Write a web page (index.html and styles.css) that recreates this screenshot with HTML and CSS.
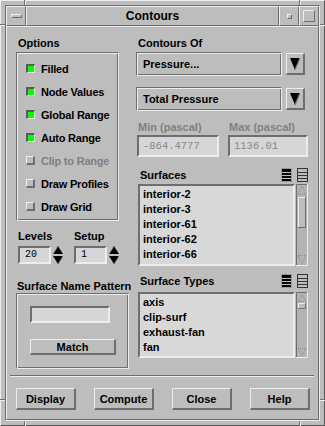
FILE: index.html
```html
<!DOCTYPE html>
<html>
<head>
<meta charset="utf-8">
<link rel="stylesheet" href="styles.css">
</head>
<body>
<div class="window">
  <span class="notch nv nt n1"></span>
  <span class="notch nv nt n2"></span>
  <span class="notch nv nb n1"></span>
  <span class="notch nv nb n2"></span>
  <span class="notch nh nl h1"></span>
  <span class="notch nh nr h1"></span>
  <span class="notch nh nl h2"></span>
  <span class="notch nh nr h2"></span>
  <div class="inner">
    <div class="titlebar">
      <div class="tb tb-btn"><span class="menu-bar"></span></div>
      <div class="tb tb-title">Contours</div>
      <div class="tb tb-btn"><span class="min-dot"></span></div>
      <div class="tb tb-btn"><span class="max-box"></span></div>
    </div>
    <div class="client">
      <div class="main">
        <div class="left">
          <div class="lbl">Options</div>
          <div class="etched opts">
            <div class="check-row"><span class="cb on"></span>Filled</div>
            <div class="check-row"><span class="cb on"></span>Node Values</div>
            <div class="check-row"><span class="cb on"></span>Global Range</div>
            <div class="check-row"><span class="cb on"></span>Auto Range</div>
            <div class="check-row dim"><span class="cb"></span>Clip to Range</div>
            <div class="check-row"><span class="cb"></span>Draw Profiles</div>
            <div class="check-row"><span class="cb"></span>Draw Grid</div>
          </div>
          <div class="spin-groups">
            <div class="spin-group">
              <div class="lbl0">Levels</div>
              <div class="spin-row">
                <div class="field sfield">20</div>
                <svg class="spin" width="10" height="18" viewBox="0 0 10 18">
                  <polygon points="5,0 10,8 0,8" fill="#000"/>
                  <polyline points="0,8 5,0" fill="none" stroke="#8a8a8a" stroke-width="1"/>
                  <polygon points="0,10 10,10 5,18" fill="#000"/>
                  <polyline points="10,10 5,18" fill="none" stroke="#6a6a6a" stroke-width="1"/>
                </svg>
              </div>
            </div>
            <div class="spin-group">
              <div class="lbl0">Setup</div>
              <div class="spin-row">
                <div class="field sfield">1</div>
                <svg class="spin" width="10" height="18" viewBox="0 0 10 18">
                  <polygon points="5,0 10,8 0,8" fill="#000"/>
                  <polyline points="0,8 5,0" fill="none" stroke="#8a8a8a" stroke-width="1"/>
                  <polygon points="0,10 10,10 5,18" fill="#000"/>
                  <polyline points="10,10 5,18" fill="none" stroke="#6a6a6a" stroke-width="1"/>
                </svg>
              </div>
            </div>
          </div>
          <div class="lbl snp-lbl">Surface Name Pattern</div>
          <div class="etched snp">
            <div class="field snp-field"></div>
            <div class="btn match">Match</div>
          </div>
        </div>
        <div class="right">
          <div class="lbl">Contours Of</div>
          <div class="dd-row">
            <div class="dd-box">Pressure...</div>
            <div class="dd-btn">
              <svg width="10" height="12" viewBox="0 0 10 12">
                <polygon points="0,0 10,0 5,12" fill="#000"/>
                <polyline points="10,0 5,12" fill="none" stroke="#7a7a7a" stroke-width="1.2"/>
              </svg>
            </div>
          </div>
          <div class="dd-row dd2">
            <div class="dd-box">Total Pressure</div>
            <div class="dd-btn">
              <svg width="10" height="12" viewBox="0 0 10 12">
                <polygon points="0,0 10,0 5,12" fill="#000"/>
                <polyline points="10,0 5,12" fill="none" stroke="#7a7a7a" stroke-width="1.2"/>
              </svg>
            </div>
          </div>
          <div class="minmax">
            <div class="mm-col">
              <div class="dim mm-lbl">Min (pascal)</div>
              <div class="field mm-field f-min">-864.4777</div>
            </div>
            <div class="mm-col">
              <div class="dim mm-lbl">Max (pascal)</div>
              <div class="field mm-field f-max">1136.01</div>
            </div>
          </div>
          <div class="list-head surf-head">
            <span class="lh-lbl">Surfaces</span>
            <span class="lh-icons">
              <svg width="11" height="14" viewBox="0 0 11 14">
                <rect x="0" y="0" width="11" height="14" fill="#000"/>
                <rect x="0.5" y="0.5" width="10" height="13" fill="none" stroke="#9a9a9a"/>
                <rect x="1" y="4" width="9" height="1" fill="#bdbdbd"/>
                <rect x="1" y="7" width="9" height="1" fill="#bdbdbd"/>
                <rect x="1" y="10" width="9" height="1" fill="#bdbdbd"/>
              </svg>
              <svg width="11" height="14" viewBox="0 0 11 14">
                <rect x="0.5" y="0.5" width="10" height="13" fill="#bdbdbd" stroke="#333"/>
                <rect x="1" y="4" width="9" height="1" fill="#333"/>
                <rect x="1" y="7" width="9" height="1" fill="#333"/>
                <rect x="1" y="10" width="9" height="1" fill="#333"/>
              </svg>
            </span>
          </div>
          <div class="listbox">
            <div class="list l1">
              <div class="item">interior-2</div>
              <div class="item">interior-3</div>
              <div class="item">interior-61</div>
              <div class="item">interior-62</div>
              <div class="item">interior-66</div>
            </div>
            <svg class="scroll" width="12" height="82" viewBox="0 0 12 82">
              <rect x="0" y="0" width="12" height="82" fill="#b4b4b4"/>
              <polyline points="0.5,82 0.5,0.5 12,0.5" fill="none" stroke="#6e6e6e"/>
              <polyline points="11.5,0 11.5,81.5 0,81.5" fill="none" stroke="#ececec"/>
              <polygon points="6,2.5 10,10.5 2,10.5" fill="none" stroke="#8a8a8a" stroke-dasharray="1,1"/>
              <rect x="2" y="13" width="8" height="31" fill="#bdbdbd"/>
              <polyline points="2.5,44 2.5,13.5 10,13.5" fill="none" stroke="#ececec"/>
              <polyline points="9.5,13 9.5,43.5 2,43.5" fill="none" stroke="#6e6e6e"/>
              <polygon points="2,71.5 10,71.5 6,79.5" fill="none" stroke="#8a8a8a" stroke-dasharray="1,1"/>
            </svg>
          </div>
          <div class="list-head types-head">
            <span class="lh-lbl">Surface Types</span>
            <span class="lh-icons">
              <svg width="11" height="14" viewBox="0 0 11 14">
                <rect x="0" y="0" width="11" height="14" fill="#000"/>
                <rect x="0.5" y="0.5" width="10" height="13" fill="none" stroke="#9a9a9a"/>
                <rect x="1" y="4" width="9" height="1" fill="#bdbdbd"/>
                <rect x="1" y="7" width="9" height="1" fill="#bdbdbd"/>
                <rect x="1" y="10" width="9" height="1" fill="#bdbdbd"/>
              </svg>
              <svg width="11" height="14" viewBox="0 0 11 14">
                <rect x="0.5" y="0.5" width="10" height="13" fill="#bdbdbd" stroke="#333"/>
                <rect x="1" y="4" width="9" height="1" fill="#333"/>
                <rect x="1" y="7" width="9" height="1" fill="#333"/>
                <rect x="1" y="10" width="9" height="1" fill="#333"/>
              </svg>
            </span>
          </div>
          <div class="listbox">
            <div class="list l2">
              <div class="item">axis</div>
              <div class="item">clip-surf</div>
              <div class="item">exhaust-fan</div>
              <div class="item">fan</div>
            </div>
            <svg class="scroll" width="12" height="66" viewBox="0 0 12 66">
              <rect x="0" y="0" width="12" height="66" fill="#b4b4b4"/>
              <polyline points="0.5,66 0.5,0.5 12,0.5" fill="none" stroke="#6e6e6e"/>
              <polyline points="11.5,0 11.5,65.5 0,65.5" fill="none" stroke="#ececec"/>
              <polygon points="6,2.5 10,9.5 2,9.5" fill="none" stroke="#8a8a8a" stroke-dasharray="1,1"/>
              <rect x="2" y="11" width="8" height="6" fill="#bdbdbd"/>
              <polyline points="2.5,17 2.5,11.5 10,11.5" fill="none" stroke="#ececec"/>
              <polyline points="9.5,11 9.5,16.5 2,16.5" fill="none" stroke="#6e6e6e"/>
              <polygon points="2,56.5 10,56.5 6,63.5" fill="none" stroke="#8a8a8a" stroke-dasharray="1,1"/>
            </svg>
          </div>
        </div>
      </div>
      <div class="sep"></div>
      <div class="buttons">
        <div class="btn act">Display</div>
        <div class="btn act">Compute</div>
        <div class="btn act">Close</div>
        <div class="btn act">Help</div>
      </div>
    </div>
  </div>
</div>
</body>
</html>
```

FILE: styles.css
```css
* { box-sizing: border-box; }

body {
  margin: 0;
  background: #bdbdbd;
  font: bold 11px/14px "Liberation Sans", Arial, sans-serif;
  color: #000;
}

.window {
  position: relative;
  width: 325px;
  height: 426px;
  background: #bdbdbd;
  border: 1px solid;
  border-color: #ededed #555 #555 #ededed;
  padding: 4px;
}

.notch { position: absolute; }
.nv { width: 2px; height: 5px; border-left: 1px solid #6e6e6e; border-right: 1px solid #ededed; }
.nh { width: 5px; height: 2px; border-top: 1px solid #6e6e6e; border-bottom: 1px solid #ededed; }
.nt { top: -1px; }
.nb { bottom: -1px; }
.n1 { left: 23px; }
.n2 { left: 298px; }
.nl { left: -1px; }
.nr { right: -1px; }
.h1 { top: 23px; }
.h2 { top: 398px; }

.inner {
  height: 100%;
  border: 1px solid;
  border-color: #6e6e6e #ededed #ededed #6e6e6e;
  display: flex;
  flex-direction: column;
}

.titlebar { display: flex; height: 20px; }
.tb {
  border: 1px solid;
  border-color: #ededed #6e6e6e #6e6e6e #ededed;
  display: flex;
  align-items: center;
  justify-content: center;
}
.tb-btn { width: 20px; }
.tb-title { flex: 1; font-size: 12px; }
.menu-bar {
  width: 11px; height: 4px;
  border: 1px solid;
  border-color: #ededed #6e6e6e #6e6e6e #ededed;
}
.min-dot {
  width: 5px; height: 5px;
  border: 1px solid;
  border-color: #ededed #6e6e6e #6e6e6e #ededed;
}
.max-box {
  width: 12px; height: 12px;
  border: 1px solid;
  border-color: #ededed #6e6e6e #6e6e6e #ededed;
}

.client {
  flex: 1;
  border: 1px solid;
  border-color: #ededed #6e6e6e #6e6e6e #ededed;
  padding-top: 9px;
}

.main { display: flex; gap: 7px; height: 334px; margin-left: 9px; }
.left { width: 113px; display: flex; flex-direction: column; }
.right { width: 172px; display: flex; flex-direction: column; }

.lbl { height: 14px; padding-left: 2px; white-space: nowrap; }
.lbl0 { height: 14px; white-space: nowrap; }

.etched {
  border: 1px solid;
  border-color: #6e6e6e #ededed #ededed #6e6e6e;
  box-shadow: inset 1px 1px 0 #ededed, inset -1px -1px 0 #6e6e6e;
}

.opts { margin-top: 2px; width: 103px; padding: 4px 0 2px 9px; }
.check-row { height: 23px; display: flex; align-items: center; gap: 6px; white-space: nowrap; letter-spacing: -0.2px; }
.cb {
  width: 9px; height: 9px; flex: none;
  border-style: solid;
  border-width: 1px 2px 2px 1px;
  border-color: #ededed #6e6e6e #6e6e6e #ededed;
  background: #bdbdbd;
}
.cb.on {
  border-width: 2px 1px 1px 2px;
  border-color: #5a5a5a #ededed #ededed #5a5a5a;
  background: #00ff00;
}
.dim { color: #808080; }

.field {
  border: 2px solid;
  border-color: #6e6e6e #ededed #ededed #6e6e6e;
  background: #d6d6d6;
  font: 10px/14px "Liberation Mono", "Courier New", monospace;
}

.spin-groups { display: flex; gap: 11px; margin-top: 8px; padding-left: 2px; }
.spin-group { width: 45px; display: flex; flex-direction: column; }
.spin-row { display: flex; margin-top: 3px; align-items: flex-start; }
.sfield { width: 33px; height: 18px; padding: 0 0 0 5px; line-height: 14px; }
.spin { margin-left: 2px; flex: none; }

.snp-lbl { margin-top: 15px; padding-left: 1px; }
.snp { width: 113px; height: 76px; padding: 12px 0 0 13px; }
.snp-field { width: 80px; height: 17px; }

.btn {
  border-style: solid;
  border-width: 1px 2px 2px 1px;
  border-color: #ededed #6e6e6e #6e6e6e #ededed;
  display: flex;
  align-items: center;
  justify-content: center;
  white-space: nowrap;
}
.match { width: 86px; height: 16px; margin-top: 16px; }

.dd-row { display: flex; gap: 4px; margin-top: 2px; align-items: flex-start; }
.dd2 { margin-top: 11px; }
.dd-box {
  width: 146px; height: 24px;
  border: 1px solid;
  border-color: #6e6e6e #ededed #ededed #6e6e6e;
  box-shadow: inset 1px 1px 0 #ededed, inset -1px -1px 0 #6e6e6e;
  padding-left: 6px;
  display: flex;
  align-items: center;
}
.dd-btn {
  width: 19px; height: 22px;
  margin-top: 1px;
  border-style: solid;
  border-width: 1px 2px 2px 1px;
  border-color: #ededed #6e6e6e #6e6e6e #ededed;
  display: flex;
  align-items: center;
  justify-content: center;
}
.dd-btn svg { display: block; }

.minmax { display: flex; gap: 9px; margin-top: 9px; padding-left: 1px; }
.mm-col { display: flex; flex-direction: column; }
.mm-lbl { height: 14px; padding-left: 1px; font-weight: bold; white-space: nowrap; }
.mm-field { height: 22px; margin-top: 1px; padding: 2px 0 0 4px; color: #888; font-size: 10.5px; }
.f-min { width: 82px; }
.f-max { width: 80px; }

.list-head { display: flex; justify-content: space-between; align-items: center; height: 14px; }
.surf-head { margin-top: 11px; }
.types-head { margin-top: 8px; }
.lh-lbl { padding-left: 4px; }
.lh-icons { display: flex; gap: 5px; }
.lh-icons svg { display: block; }

.listbox { display: flex; margin-top: 2px; margin-left: 2px; gap: 1px; }
.list {
  width: 157px;
  border: 2px solid;
  border-color: #6e6e6e #ededed #ededed #6e6e6e;
  background: #d8d8d8;
  padding: 1px 0 0 3px;
}
.l1 { height: 82px; }
.l2 { height: 66px; }
.types-head + .listbox { margin-top: 4px; }
.item { height: 15px; line-height: 15px; white-space: nowrap; }
.scroll { display: block; flex: none; }

.sep {
  height: 2px;
  margin: 5px 4px 0 3px;
  border-top: 1px solid #6e6e6e;
  border-bottom: 1px solid #ededed;
}

.buttons { display: flex; gap: 18px; margin-top: 11px; padding-left: 9px; }
.act { width: 60px; height: 22px; }
```
